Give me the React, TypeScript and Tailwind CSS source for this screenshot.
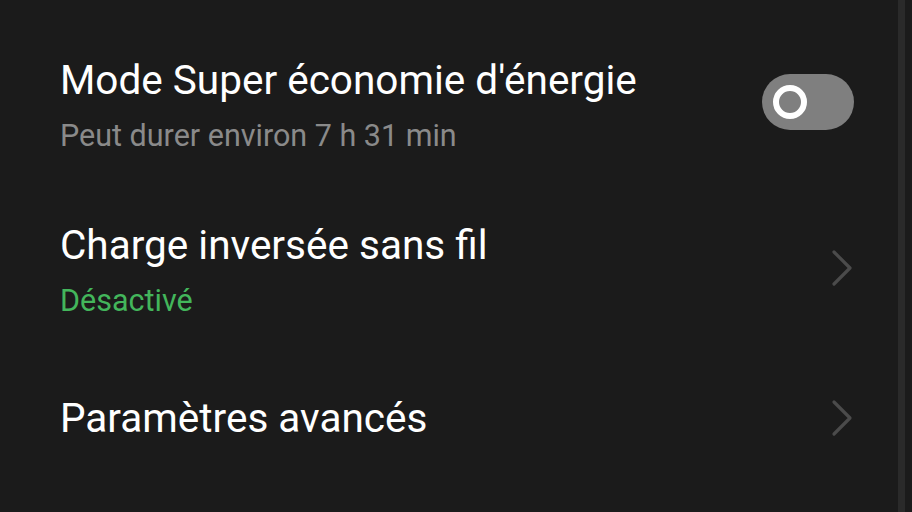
import React from 'react';

const Chevron: React.FC = () => (
  <svg width="24" height="38" viewBox="0 0 24 38" fill="none">
    <path d="M4 3 L20 19 L4 35" stroke="#4b4b4b" strokeWidth="3.2" strokeLinecap="round" strokeLinejoin="round" />
  </svg>
);

const Toggle: React.FC = () => (
  <div className="w-[92px] h-[56px] rounded-full bg-[#7f7f7f] flex items-center pl-[11px]">
    <div className="w-[34px] h-[34px] rounded-full border-[6px] border-white bg-[#7f7f7f]" />
  </div>
);

export default function App() {
  return (
    <div
      className="w-[912px] h-[512px] bg-[#1b1b1b] flex overflow-hidden"
      style={{ fontFamily: 'Roboto, "Noto Sans", sans-serif' }}
    >
      <div className="flex-1 flex flex-col">
        <div className="h-[186px] pt-[55px] pl-[60px] pr-[44px] flex items-start justify-between">
          <div className="flex flex-col">
            <span className="text-[40.5px] leading-[50px] text-white">Mode Super économie d'énergie</span>
            <span className="text-[30.5px] leading-[40px] mt-[11px] text-[#8a8a8a]">Peut durer environ 7 h 31 min</span>
          </div>
          <div className="mt-[19px]">
            <Toggle />
          </div>
        </div>
        <div className="h-[168px] pt-[34px] pl-[60px] pr-[44px] flex items-start justify-between">
          <div className="flex flex-col">
            <span className="text-[40.5px] leading-[50px] text-white">Charge inversée sans fil</span>
            <span className="text-[30.5px] leading-[40px] mt-[11px] text-[#43b65b]">Désactivé</span>
          </div>
          <div className="mt-[29px]">
            <Chevron />
          </div>
        </div>
        <div className="flex-1 pt-[39px] pl-[60px] pr-[44px] flex items-start justify-between">
          <span className="text-[40.5px] leading-[50px] text-white">Paramètres avancés</span>
          <div className="mt-[6px]">
            <Chevron />
          </div>
        </div>
      </div>
      <div className="w-[7px] bg-[#2a2a2a]" />
      <div className="w-[7px] bg-[#1b1b1b]" />
    </div>
  );
}
